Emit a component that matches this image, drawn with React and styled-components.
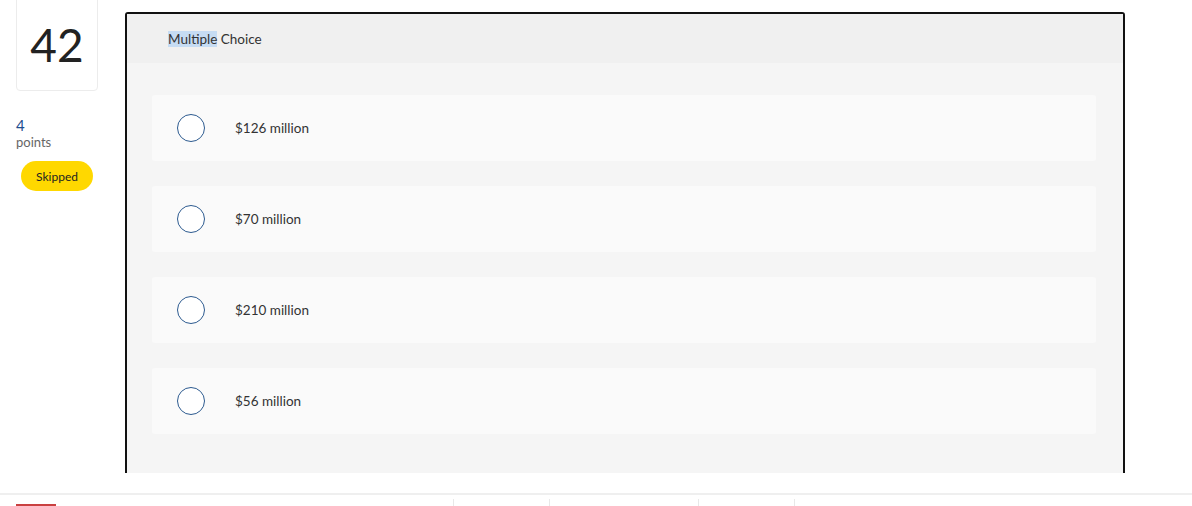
import React from 'react'
import styled, { createGlobalStyle } from 'styled-components'

const Global = createGlobalStyle`
  body {
    margin: 0;
    background: #fff;
    font-family: Lato, "Open Sans", sans-serif;
    color: #333;
  }
`

const Page = styled.div`
  height: 506px;
  overflow: hidden;
  display: flex;
  flex-direction: column;
`

const Top = styled.div`
  height: 495px;
  display: flex;
  border-bottom: 2px solid #efefef;
  box-sizing: border-box;
`

const Side = styled.div`
  width: 125px;
  padding-left: 16px;
  box-sizing: border-box;
  flex-shrink: 0;
`

const NumberBox = styled.div`
  width: 82px;
  height: 100px;
  margin-top: -9px;
  border: 1px solid #ececec;
  border-radius: 4px;
  box-sizing: border-box;
  display: flex;
  align-items: center;
  justify-content: center;
  padding-top: 7px;
  font-size: 46px;
  color: #222;
`

const Points = styled.div`
  margin-top: 25px;
  font-size: 15px;
  line-height: 18px;
  color: #1d4e8f;
`

const PointsLabel = styled.div`
  font-size: 13px;
  line-height: 16px;
  color: #666;
`

const Badge = styled.div`
  margin: 11px 0 0 5px;
  width: 72px;
  height: 30px;
  border-radius: 15px;
  background: #ffd800;
  font-size: 12px;
  color: #222;
  display: flex;
  align-items: center;
  justify-content: center;
`

const Main = styled.div`
  height: 473px;
  overflow: hidden;
  padding-top: 12px;
  box-sizing: border-box;
`

const Card = styled.div`
  width: 1000px;
  height: 600px;
  border: 2px solid #111;
  border-radius: 3px;
  background: #f5f5f5;
  box-sizing: border-box;
`

const CardHeader = styled.div`
  height: 49px;
  background: #f0f0f0;
  display: flex;
  align-items: center;
  padding-left: 41px;
  font-size: 13.5px;
  color: #333;
`

const Selected = styled.span`
  background: #c6dcf3;
`

const Options = styled.div`
  display: flex;
  flex-direction: column;
  gap: 25px;
  padding: 32px 27px 0 25px;
`

const Option = styled.div`
  height: 66px;
  background: #fafafa;
  border-radius: 3px;
  display: flex;
  align-items: center;
  padding-left: 25px;
  gap: 30px;
  font-size: 13.5px;
  color: #333;
`

const Radio = styled.span`
  width: 28px;
  height: 28px;
  border: 1.5px solid #2c5a8f;
  border-radius: 50%;
  background: #fff;
  box-sizing: border-box;
`

const Footer = styled.div`
  display: flex;
  height: 11px;
`

const Tab = styled.div`
  width: 40px;
  margin-left: 16px;
  margin-top: 9px;
  height: 2px;
  background: ${(p) => p.color};
`

const Sep = styled.div`
  width: 1px;
  margin-top: 4px;
  margin-left: ${(p) => p.offset}px;
  background: #e8e8e8;
`

const answers = ['$126 million', '$70 million', '$210 million', '$56 million']

export default function App() {
  return (
    <Page>
      <Global />
      <Top>
        <Side>
          <NumberBox>42</NumberBox>
          <Points>4</Points>
          <PointsLabel>points</PointsLabel>
          <Badge>Skipped</Badge>
        </Side>
        <Main>
          <Card>
            <CardHeader>
              <span>
                <Selected>Multiple</Selected> Choice
              </span>
            </CardHeader>
            <Options>
              {answers.map((a) => (
                <Option key={a}>
                  <Radio />
                  {a}
                </Option>
              ))}
            </Options>
          </Card>
        </Main>
      </Top>
      <Footer>
        <Tab color="#c94040" />
        <Sep offset={397} />
        <Sep offset={95} />
        <Sep offset={148} />
        <Sep offset={95} />
      </Footer>
    </Page>
  )
}
